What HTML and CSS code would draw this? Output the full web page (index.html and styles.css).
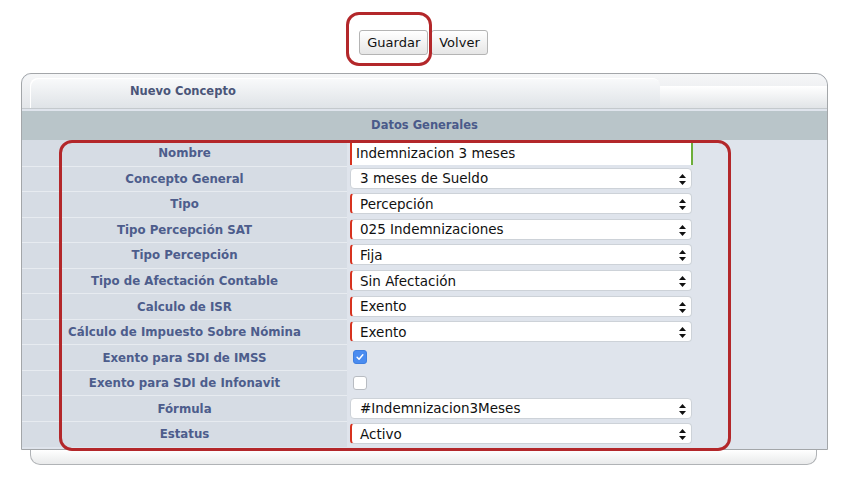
FILE: index.html
```html
<!DOCTYPE html>
<html lang="es">
<head>
<meta charset="utf-8">
<title>Nuevo Concepto</title>
<link rel="stylesheet" href="styles.css">
</head>
<body>
<div class="toolbar">
  <div class="btn-wrap">
    <button class="btn">Guardar</button>
    <span class="highlight"></span>
  </div>
  <button class="btn">Volver</button>
</div>

<div class="panel">
  <div class="tabs">
    <div class="tab">Nuevo Concepto</div>
    <div class="tab-rest"></div>
  </div>
  <div class="section-title">Datos Generales</div>
  <div class="form">
    <div class="row"><div class="label">Nombre</div><div class="value"><input class="text" type="text" value="Indemnizacion 3 meses"></div></div>
    <div class="row"><div class="label">Concepto General</div><div class="value"><div class="select"><span>3 meses de Sueldo</span><svg class="arrows" viewBox="0 0 7 11"><path d="M3.5 0L7 4H0z M3.5 11L0 7H7z"/></svg></div></div></div>
    <div class="row"><div class="label">Tipo</div><div class="value"><div class="select req"><span>Percepción</span><svg class="arrows" viewBox="0 0 7 11"><path d="M3.5 0L7 4H0z M3.5 11L0 7H7z"/></svg></div></div></div>
    <div class="row"><div class="label">Tipo Percepción SAT</div><div class="value"><div class="select req"><span>025 Indemnizaciones</span><svg class="arrows" viewBox="0 0 7 11"><path d="M3.5 0L7 4H0z M3.5 11L0 7H7z"/></svg></div></div></div>
    <div class="row"><div class="label">Tipo Percepción</div><div class="value"><div class="select req"><span>Fija</span><svg class="arrows" viewBox="0 0 7 11"><path d="M3.5 0L7 4H0z M3.5 11L0 7H7z"/></svg></div></div></div>
    <div class="row"><div class="label">Tipo de Afectación Contable</div><div class="value"><div class="select req"><span>Sin Afectación</span><svg class="arrows" viewBox="0 0 7 11"><path d="M3.5 0L7 4H0z M3.5 11L0 7H7z"/></svg></div></div></div>
    <div class="row"><div class="label">Calculo de ISR</div><div class="value"><div class="select req"><span>Exento</span><svg class="arrows" viewBox="0 0 7 11"><path d="M3.5 0L7 4H0z M3.5 11L0 7H7z"/></svg></div></div></div>
    <div class="row"><div class="label">Cálculo de Impuesto Sobre Nómina</div><div class="value"><div class="select req"><span>Exento</span><svg class="arrows" viewBox="0 0 7 11"><path d="M3.5 0L7 4H0z M3.5 11L0 7H7z"/></svg></div></div></div>
    <div class="row"><div class="label">Exento para SDI de IMSS</div><div class="value"><span class="check checked"><svg viewBox="0 0 14 14"><path d="M3.6 7.2l2.3 2.4 4.4-5.2" fill="none" stroke="#fff" stroke-width="1.7" stroke-linecap="round" stroke-linejoin="round"/></svg></span></div></div>
    <div class="row"><div class="label">Exento para SDI de Infonavit</div><div class="value"><span class="check"></span></div></div>
    <div class="row"><div class="label">Fórmula</div><div class="value"><div class="select"><span>#Indemnizacion3Meses</span><svg class="arrows" viewBox="0 0 7 11"><path d="M3.5 0L7 4H0z M3.5 11L0 7H7z"/></svg></div></div></div>
    <div class="row"><div class="label">Estatus</div><div class="value"><div class="select req"><span>Activo</span><svg class="arrows" viewBox="0 0 7 11"><path d="M3.5 0L7 4H0z M3.5 11L0 7H7z"/></svg></div></div></div>
    <span class="frame"></span>
  </div>
</div>
<div class="footer"></div>
</body>
</html>
```

FILE: styles.css
```css
* { box-sizing: border-box; }
html, body { margin: 0; padding: 0; background: #fff; }
body { font-family: "DejaVu Sans", Verdana, sans-serif; }

.toolbar {
  display: flex;
  justify-content: center;
  gap: 3px;
  padding-top: 30px;
  margin-bottom: 18px;
}
.btn-wrap { position: relative; }
.btn {
  height: 25px;
  padding: 0 7px;
  font-family: "DejaVu Sans", sans-serif;
  font-size: 13px;
  color: #111;
  background: linear-gradient(#ffffff, #e6e6e6);
  border: 1px solid #b4b4b4;
  border-radius: 3px;
  display: block;
}
.highlight {
  position: absolute;
  left: -13px;
  top: -18px;
  width: 86px;
  height: 54px;
  border: 3px solid #b3272a;
  border-radius: 13px;
  pointer-events: none;
}

.panel {
  margin: 0 19px 0 21px;
  border: 1px solid #a3a6a9;
  border-radius: 10px 12px 0 0;
  background: #dfe4ec;
}
.tabs {
  display: flex;
  height: 35px;
  padding-left: 8px;
  padding-top: 4px;
  border-radius: 10px 12px 0 0;
  background: linear-gradient(#f6f7f8, #e3e6e9);
  border-bottom: 1px solid #c4c9cd;
}
.tab {
  width: 630px;
  border-radius: 8px 8px 0 0;
  background: linear-gradient(#f9fafb, #dfe3e7);
  padding-left: 100px;
  font-size: 11.5px;
  font-weight: bold;
  color: #4a5578;
  line-height: 22px;
  padding-top: 2px;
  box-shadow: inset 1px 1px 0 #ffffff;
}
.tab-rest {
  flex: 1;
  margin-top: 8px;
  background: linear-gradient(#ffffff, #e1e4e7);
}
.section-title {
  margin-top: 2px;
  height: 29px;
  background: #b9c5c9;
  text-align: center;
  font-size: 11.5px;
  font-weight: bold;
  color: #4a5a8a;
  line-height: 29px;
}
.form {
  position: relative;
  padding-bottom: 2px;
  background: #dfe4ec;
}
.row {
  display: grid;
  grid-template-columns: 325px 1fr;
  height: 25.55px;
}
.label {
  background: #d6dce4;
  border-top: 1px solid #e7ebf0;
  text-align: center;
  font-size: 11.8px;
  font-weight: bold;
  color: #4d5d8c;
  display: flex;
  align-items: center;
  justify-content: center;
}
.row:first-child .label { border-top: none; }
.value {
  display: flex;
  align-items: center;
  padding-left: 3px;
  background: #dfe4ec;
}
.text {
  width: 343px;
  height: 24px;
  margin-top: 1px;
  border: none;
  border-left: 2px solid #d7321f;
  border-right: 2px solid #6cae3a;
  background: #fff;
  font-family: "DejaVu Sans", sans-serif;
  font-size: 13.5px;
  color: #111;
  padding: 0 4px;
}
.select {
  position: relative;
  width: 342px;
  height: 21px;
  background: #fff;
  border: 1px solid #cdd2d8;
  border-radius: 4px;
  font-size: 13.5px;
  color: #111;
  padding-left: 9px;
  display: flex;
  align-items: center;
}
.select.req { border-left: 2px solid #d7321f; padding-left: 8px; }
.arrows {
  position: absolute;
  right: 5px;
  top: 5px;
  width: 7px;
  height: 11px;
  fill: #111;
}
.check {
  width: 14px;
  height: 14px;
  margin-left: 3px;
  border: 1px solid #b8bcc2;
  border-radius: 3px;
  background: #fff;
  display: block;
}
.check svg { display: block; width: 12px; height: 12px; }
.check.checked {
  background: #4a8cf0;
  border-color: #3f7fe0;
}
.frame {
  position: absolute;
  left: 37px;
  top: 0;
  width: 672px;
  height: 311px;
  border: 3px solid #b3272a;
  border-radius: 13px;
  pointer-events: none;
}
.footer {
  margin: 0 30px 0 30px;
  height: 15px;
  border: 1px solid #b0b3b6;
  border-top: none;
  border-radius: 0 0 10px 10px;
  background: linear-gradient(#ffffff, #e9eaeb);
}
```
